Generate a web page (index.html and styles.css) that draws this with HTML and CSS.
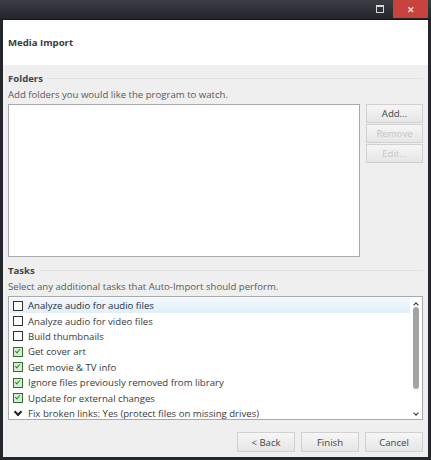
FILE: index.html
```html
<!DOCTYPE html>
<html lang="en">
<head>
  <meta charset="UTF-8">
  <title>Media Import</title>
  <link rel="stylesheet" href="styles.css">
</head>
<body>

<div class="window">
  <!-- title bar -->
  <div class="titlebar">
    <div class="tb-btn max"><span class="max-icon"></span></div>
    <div class="tb-btn close">&#x2715;</div>
  </div>

  <div class="content">
    <div class="header">Media Import</div>

    <div class="body">
      <!-- folders -->
      <div class="group-title"><span>Folders</span></div>
      <div class="desc">Add folders you would like the program to watch.</div>
      <div class="folder-row">
        <div class="folder-list"></div>
        <div class="side-buttons">
          <div class="btn">Add...</div>
          <div class="btn disabled">Remove</div>
          <div class="btn disabled">Edit...</div>
        </div>
      </div>

      <!-- tasks -->
      <div class="group-title tasks-title"><span>Tasks</span></div>
      <div class="desc">Select any additional tasks that Auto-Import should perform.</div>
      <div class="task-list">
        <ul class="tasks">
          <li class="selected"><span class="check"></span>Analyze audio for audio files</li>
          <li><span class="check"></span>Analyze audio for video files</li>
          <li><span class="check"></span>Build thumbnails</li>
          <li><span class="check on"></span>Get cover art</li>
          <li><span class="check on"></span>Get movie &amp; TV info</li>
          <li><span class="check on"></span>Ignore files previously removed from library</li>
          <li><span class="check on"></span>Update for external changes</li>
          <li><span class="chev"></span>Fix broken links: Yes (protect files on missing drives)</li>
        </ul>
        <div class="scrollbar">
          <span class="arrow up"></span>
          <div class="track"><div class="thumb"></div></div>
          <span class="arrow down"></span>
        </div>
      </div>

      <div class="footer">
        <div class="btn wide">&lt; Back</div>
        <div class="btn wide">Finish</div>
        <div class="btn wide">Cancel</div>
      </div>
    </div>
  </div>
</div>

</body>
</html>
```

FILE: styles.css
```css
/* base */
body {
  margin: 0;
  font-family: "Open Sans", "Noto Sans", sans-serif;
  font-size: 9.6px;
  color: #333;
  background: #1f2126;
}
.window {
  width: 431px;
  height: 460px;
  box-sizing: border-box;
  padding: 0 3px 3px 3px;
  background: #23262b;
  display: flex;
  flex-direction: column;
}

/* title bar */
.titlebar {
  height: 19px;
  flex: none;
  display: flex;
  justify-content: flex-end;
  align-items: flex-start;
  background: linear-gradient(#3a3d44, #22252a);
  margin: 0 -3px;
  padding-right: 3px;
  border-bottom: 1px solid #16181b;
}
.tb-btn {
  height: 18px;
  display: flex;
  align-items: center;
  justify-content: center;
}
.tb-btn.max {
  width: 9px;
  margin-right: 9px;
}
.max-icon {
  width: 6px;
  height: 5px;
  border: 1px solid #d8d8d8;
  border-top-width: 2px;
}
.tb-btn.close {
  width: 35px;
  background: #c8423e;
  color: #f4dcdc;
  font-size: 9px;
  font-weight: bold;
}

/* content */
.content {
  flex: 1;
  background: #efefef;
  display: flex;
  flex-direction: column;
}
.header {
  height: 45px;
  background: #fff;
  padding-left: 5px;
  display: flex;
  align-items: center;
  font-weight: bold;
  color: #3c3c3c;
}
.body {
  padding: 5px 5px 0 5px;
  display: flex;
  flex-direction: column;
}
.group-title {
  display: flex;
  align-items: center;
  height: 16px;
  font-weight: bold;
  color: #444;
}
.group-title::after {
  content: "";
  flex: 1;
  height: 1px;
  background: #e2e2e2;
  margin-left: 4px;
}
.tasks-title {
  margin-top: 5px;
}
.desc {
  height: 18px;
  line-height: 18px;
  color: #5a5a5a;
}

/* folders */
.folder-row {
  display: flex;
  gap: 6px;
}
.folder-list {
  width: 350px;
  height: 151px;
  background: #fff;
  border: 1px solid #a9a9a9;
}
.side-buttons {
  display: flex;
  flex-direction: column;
  gap: 1px;
}
.btn {
  width: 55px;
  height: 17px;
  border: 1px solid #d0d0d0;
  background: linear-gradient(#f6f6f6, #e6e6e6);
  display: flex;
  align-items: center;
  justify-content: center;
  color: #444;
}
.btn.disabled {
  color: #c4c4c4;
}

/* tasks */
.task-list {
  height: 124px;
  background: #fff;
  border: 1px solid #a9a9a9;
  display: flex;
  padding: 1px 0 0 1px;
  box-sizing: border-box;
}
.tasks {
  list-style: none;
  margin: 0;
  padding: 0;
  flex: 1;
}
.tasks li {
  height: 15.4px;
  display: flex;
  align-items: center;
  padding-left: 3px;
  color: #3a3a3a;
}
.tasks li.selected {
  background: linear-gradient(#f2f8fd, #e2eff9);
  color: #1e2e44;
}
.check {
  width: 8px;
  height: 8px;
  border: 1px solid #333;
  background: #fff;
  margin-right: 5px;
  flex: none;
  position: relative;
}
.check.on {
  border-color: #2f6e2c;
  background: #d6ecd0;
}
.check.on::after {
  content: "";
  position: absolute;
  left: 2px;
  top: 0;
  width: 2px;
  height: 4px;
  border: solid #2e8a2a;
  border-width: 0 1.5px 1.5px 0;
  transform: rotate(40deg);
}
.chev {
  width: 10px;
  height: 10px;
  margin-right: 5px;
  flex: none;
  display: flex;
  align-items: center;
  justify-content: center;
}
.chev::before {
  content: "";
  width: 4px;
  height: 4px;
  border: solid #222;
  border-width: 0 2px 2px 0;
  transform: rotate(45deg);
  margin-top: -3px;
}

/* scrollbar */
.scrollbar {
  width: 12px;
  display: flex;
  flex-direction: column;
  align-items: center;
  padding: 2px 0;
}
.arrow {
  width: 3px;
  height: 3px;
  border: solid #333;
  border-width: 1.5px 0 0 1.5px;
  transform: rotate(45deg);
  margin: 3px 0 0;
}
.arrow.down {
  transform: rotate(225deg);
  margin: 1px 0 2px;
}
.track {
  flex: 1;
  width: 100%;
  display: flex;
  justify-content: center;
}
.thumb {
  width: 6px;
  height: 82px;
  margin-top: 0;
  border-radius: 3px;
  background: #a4a4a4;
}

/* footer buttons */
.footer {
  display: flex;
  justify-content: flex-end;
  gap: 6px;
  margin-top: 12px;
}
.btn.wide {
  width: 56px;
  height: 18px;
}
```
